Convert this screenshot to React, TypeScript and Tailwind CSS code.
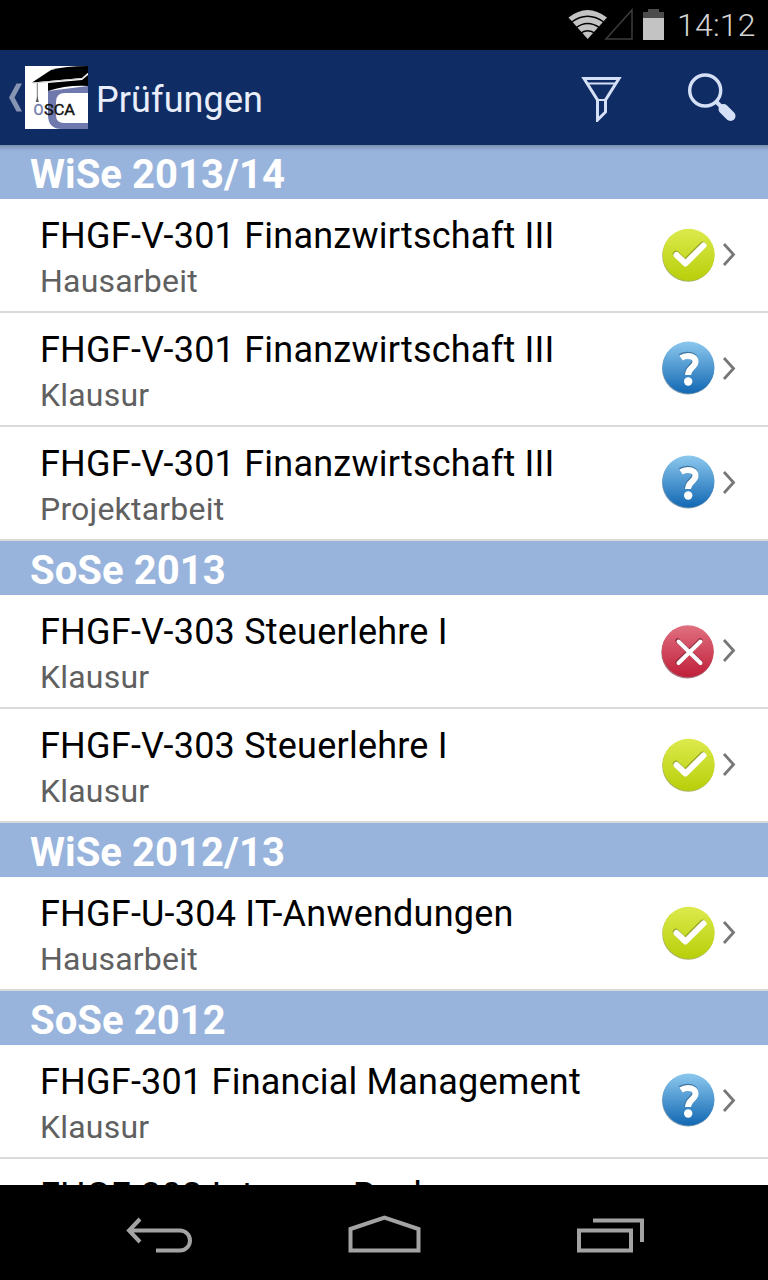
import { useId } from 'react';

type Status = 'passed' | 'open' | 'failed';

interface Exam {
    title: string;
    kind: string;
    status: Status;
}

interface Semester {
    name: string;
    exams: Exam[];
}

const semesters: Semester[] = [
    {
        name: 'WiSe 2013/14',
        exams: [
            { title: 'FHGF-V-301 Finanzwirtschaft III', kind: 'Hausarbeit', status: 'passed' },
            { title: 'FHGF-V-301 Finanzwirtschaft III', kind: 'Klausur', status: 'open' },
            { title: 'FHGF-V-301 Finanzwirtschaft III', kind: 'Projektarbeit', status: 'open' },
        ],
    },
    {
        name: 'SoSe 2013',
        exams: [
            { title: 'FHGF-V-303 Steuerlehre I', kind: 'Klausur', status: 'failed' },
            { title: 'FHGF-V-303 Steuerlehre I', kind: 'Klausur', status: 'passed' },
        ],
    },
    {
        name: 'WiSe 2012/13',
        exams: [{ title: 'FHGF-U-304 IT-Anwendungen', kind: 'Hausarbeit', status: 'passed' }],
    },
    {
        name: 'SoSe 2012',
        exams: [
            { title: 'FHGF-301 Financial Management', kind: 'Klausur', status: 'open' },
            { title: 'FHGF-302 Internes Rechnungswesen', kind: 'Klausur', status: 'open' },
        ],
    },
];

const badgeColors: Record<Status, [string, string, string]> = {
    passed: ['#dcea4c', '#b8cf0a', '#93a03a'],
    open: ['#8cc8ee', '#1268b3', '#5a7f9c'],
    failed: ['#e0707f', '#c01f3a', '#8d5560'],
};

function StatusBadge({ status }: { status: Status }) {
    const id = useId();
    const [top, bottom, rim] = badgeColors[status];
    return (
        <svg width="56" height="56" viewBox="0 0 56 56" fill="none" className="shrink-0">
            <defs>
                <linearGradient id={id} x1="0" y1="0" x2="0" y2="1">
                    <stop offset="0" stopColor={top} />
                    <stop offset="1" stopColor={bottom} />
                </linearGradient>
            </defs>
            {status === 'passed' && (
                <>
                    <circle cx="28.2" cy="28.7" r="26" fill={rim} opacity="0.8" />
                    <circle cx="28.7" cy="27.7" r="26" fill={`url(#${id})`} />
                    <path d="M16 27l9 8.500L42.500 18" stroke="#98a52c" strokeWidth="6.500" strokeLinecap="round" strokeLinejoin="round" />
                    <path d="M16.500 28l9 8.500L43.500 18.500" stroke="#fff" strokeWidth="6" strokeLinecap="round" strokeLinejoin="round" />
                </>
            )}
            {status === 'open' && (
                <>
                    <circle cx="28" cy="27.5" r="26" fill={rim} opacity="0.8" />
                    <circle cx="28.500" cy="26.5" r="26" fill={`url(#${id})`} />
                    <path d="M20.500 16q3-2 7-2c5 0 7.500 2.300 7.500 5.800 0 6-7.500 6-7.500 13.700" stroke="#3f759e" strokeWidth="6.500" />
                    <path d="M21 17q3-2 7-2c5 0 7.500 2.300 7.500 5.500 0 6-7.500 6-7.500 13.500" stroke="#fff" strokeWidth="6" />
                    <circle cx="28.200" cy="40.500" r="4.200" fill="#fff" />
                </>
            )}
            {status === 'failed' && (
                <>
                    <circle cx="27.3" cy="29.5" r="26" fill={rim} opacity="0.8" />
                    <circle cx="27.800" cy="28.3" r="26" fill={`url(#${id})`} />
                    <path d="M17.500 17.500l23 22M40.500 17.500l-23 22" stroke="#8f2e40" strokeWidth="4.500" strokeLinecap="round" />
                    <path d="M18.500 18.500l22 21.500M40.500 18.500l-22 21.500" stroke="#fff" strokeWidth="4" strokeLinecap="round" />
                </>
            )}
        </svg>
    );
}

function ExamRow({ title, kind, status }: Exam) {
    return (
        <li className="flex h-[114px] shrink-0 items-start border-b-2 border-[#d9d9d9] bg-white pl-10">
            <div className="flex-1 whitespace-nowrap pt-4">
                <h3 className="text-[36px] leading-[42px] tracking-[0.22px] text-black">{title}</h3>
                <p className="pt-1 text-[32px] leading-[40px] tracking-[0.2px] text-[#606060]">{kind}</p>
            </div>
            <div className="flex items-center pt-[28px] pr-8">
                <StatusBadge status={status} />
                <svg width="20" height="28" viewBox="0 0 20 28" fill="none" className="shrink-0">
                    <path d="M8 3l9.500 10.500L8 24" stroke="#777" strokeWidth="2.800" />
                </svg>
            </div>
        </li>
    );
}

function StatusBar() {
    return (
        <div className="flex h-[50px] shrink-0 items-center bg-black">
            <svg width="110" height="50" viewBox="560 0 110 50" className="ml-[560px] shrink-0">
                <path d="M568.500 17.500Q587.500 2.500 607 17.500L587.700 39Z" fill="#c3c3c3" />
                <path d="M571 22.500Q587.500 10 604.500 22.500M575.500 28Q587.500 19 600 28M580 33.500Q587.500 28 595.500 33.500" stroke="#000" strokeWidth="1.500" fill="none" />
                <path d="M632 10v29h-26z" fill="none" stroke="#3c3c3c" strokeWidth="1.500" />
                <path d="M648 9h11v3h5v7h-21v-7h5z" fill="#4c4c4c" />
                <path d="M643 18h21v22h-21z" fill="#c3c3c3" />
            </svg>
            <span className="ml-[7px] text-[32px] leading-[50px] font-light tracking-[0.2px] text-[#d4d4d4]">14:12</span>
        </div>
    );
}

function AppIcon() {
    return (
        <svg width="63" height="63" viewBox="0 0 63 63" className="shrink-0">
            <path d="M0 0h63v63H0z" fill="#fff" />
            <path d="M63 20v7H40q-9 0-9 9v13q0 8 8 8h24v6H37q-14 0-14-14V25z" fill="#7079ad" />
            <path d="M23 17l34-3 6-5v11q-22-1-40 5z" fill="#000" />
            <path d="M7 16.500L26 4q14-4 37-4v7l-6 5z" fill="#000" />
            <path d="M8 17l49-4.500 6-5.500" stroke="#ccc" strokeWidth="1" fill="none" />
            <path d="M12.300 17v15" stroke="#777" strokeWidth="1" />
            <path d="M12.300 30l1.500 6h-3z" fill="#555" />
            <g fontFamily="Roboto, sans-serif" fontSize="15" strokeWidth=".4">
                <text x="8.500" y="49" fill="#7079ad" stroke="#7079ad" textLength="10" lengthAdjust="spacingAndGlyphs">
                    O
                </text>
                <text x="19" y="49" fill="#111" stroke="#111" textLength="31" lengthAdjust="spacingAndGlyphs">
                    SCA
                </text>
            </g>
        </svg>
    );
}

function ActionBar() {
    return (
        <header className="flex h-[95px] shrink-0 items-center bg-[#0f2d64] pr-[31px]">
            <svg width="25" height="36" viewBox="0 0 25 36" className="shrink-0">
                <path d="M16.500 3.500h5.500L14.500 17.500l7.500 14h-5.500L9 17.500z" fill="#8795b2" />
            </svg>
            <AppIcon />
            <h1 className="flex-1 pt-1 pl-2 text-[36px] leading-[44px] tracking-[0.1px] text-[#e9eefa]">Prüfungen</h1>
            <svg width="42" height="48" viewBox="0 0 42 48" fill="none" stroke="#d5e0f7" strokeWidth="3" className="mr-[65px]">
                <path d="M4 4.500h35L25.500 26v12l-8 8V26z" />
                <path d="M7 9.500h29" strokeWidth="2" />
                <path d="M17.500 26h8" strokeWidth="2" />
            </svg>
            <svg width="50" height="50" viewBox="0 0 50 50" fill="none" stroke="#d5e0f7">
                <circle cx="18.200" cy="17.500" r="15.500" strokeWidth="3.400" />
                <path d="M29 28.500l6 6" strokeWidth="4" />
                <path d="M36.500 36l7 7" strokeWidth="10" strokeLinecap="round" />
            </svg>
        </header>
    );
}

function NavigationBar() {
    return (
        <nav className="flex h-[95px] shrink-0 items-center justify-between bg-black px-[123px] pt-[5px]">
            <svg width="72" height="48" viewBox="0 0 72 48" fill="none" stroke="#a3a3a3" strokeWidth="4">
                <path d="M17 8L6 19.500 17 31M7 19.500h50a9.500 9.500 0 0 1 0 20H33" />
            </svg>
            <svg width="76" height="48" viewBox="0 0 76 48" fill="none" stroke="#a3a3a3" strokeWidth="4">
                <path d="M4.500 18L38.500 6.500l34 11.500v21.500h-68z" />
            </svg>
            <svg width="72" height="48" viewBox="0 0 72 48" fill="none" stroke="#a3a3a3" strokeWidth="4">
                <path d="M6 19.500h52v20H6zM20 9.500h49V31" />
            </svg>
        </nav>
    );
}

export default function App() {
    return (
        <div className="flex h-[1280px] w-[768px] flex-col overflow-hidden bg-black font-['Roboto',sans-serif]">
            <StatusBar />
            <ActionBar />
            <main className="relative flex min-h-0 flex-1 flex-col overflow-hidden bg-white">
                {/* Shadow cast by the action bar */}
                <div className="absolute inset-x-0 top-0 h-1.5 bg-linear-to-b from-black/20 to-transparent" />
                {semesters.map((semester) => (
                    <section key={semester.name} className="shrink-0">
                        <h2 className="h-[54px] bg-[#98b4dc] pt-px pl-[30px] text-[40px] leading-[58px] font-bold tracking-[0.05px] text-white">
                            {semester.name}
                        </h2>
                        <ul>
                            {semester.exams.map((exam, i) => (
                                <ExamRow key={i} {...exam} />
                            ))}
                        </ul>
                    </section>
                ))}
            </main>
            <NavigationBar />
        </div>
    );
}
